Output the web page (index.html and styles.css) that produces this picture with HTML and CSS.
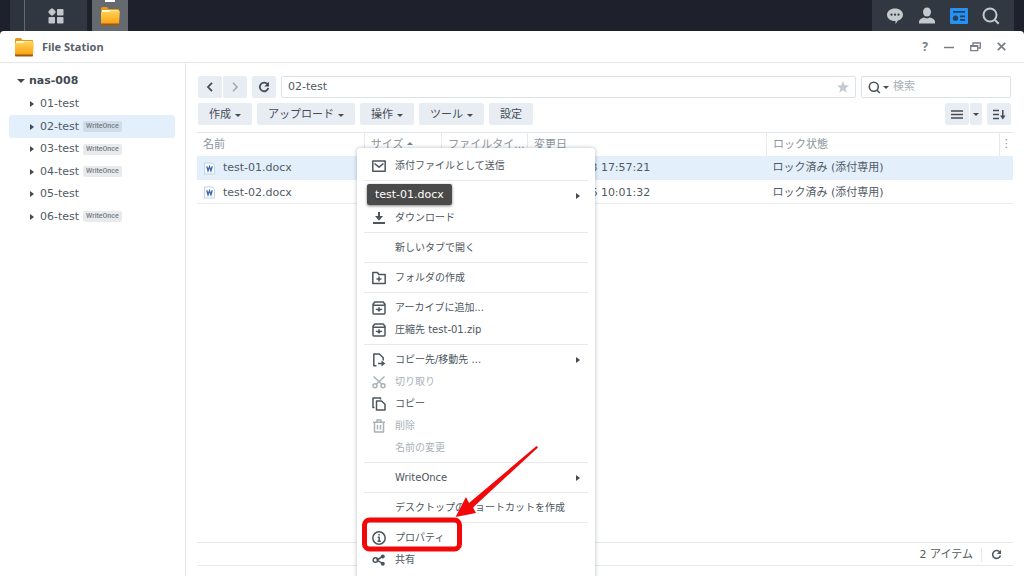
FILE: index.html
```html
<!DOCTYPE html>
<html lang="ja">
<head>
<meta charset="utf-8">
<title>File Station</title>
<link rel="stylesheet" href="styles.css">
</head>
<body>
<svg width="0" height="0" class="defs" aria-hidden="true">
  <defs>
    <linearGradient id="gold" x1="0" y1="0" x2="0" y2="1"><stop offset="0" stop-color="#ffd45a"/><stop offset="1" stop-color="#fb9d0c"/></linearGradient>
    <symbol id="folder" viewBox="0 0 20 20">
      <path d="M1 2.500Q1 1 2.500 1H7l1.500 2H18q1 0 1 1v10H1z" fill="#e59a16"/>
      <path d="M2 4h16v6H2z" fill="#fff6d8"/>
      <path d="M1 6h8l1.500-1.500H19q.8 0 .8 1L19 18q0 1-1 1H2q-1 0-1-1z" fill="url(#gold)"/>
      <path d="M1 17.500h18V18q0 1.500-1 1.500H2q-1 0-1-1z" fill="#9c5a16"/>
    </symbol>
    <symbol id="reload" viewBox="0 0 12 12"><path d="M9.500 3.300A4.300 4.300 0 1 0 10.300 7" fill="none" stroke="currentColor" stroke-width="1.800"/><path d="M11 .8V5.500H6.300z" fill="currentColor"/></symbol>
    <symbol id="archive" viewBox="0 0 14 14"><path d="M2.800 1h8.400L13 3.300V12q0 1-1 1H2q-1 0-1-1V3.300zM1 4.300h12" fill="none" stroke="currentColor" stroke-width="1.500"/><path d="M6.200 6.200h1.600v1.500h2.400v1.400H8.800L7 11 5.200 9.100H3.800V7.700h2.400z" fill="currentColor"/></symbol>
    <symbol id="doc" viewBox="0 0 12 13"><path d="M.5.500h8.500l2.500 2.500v9.500H.5z" fill="#fff" stroke="#b9cfe2"/><path d="M3 4l1.400 5L6 4.500 7.600 9 9 4" fill="none" stroke="#3a66b4" stroke-width="1.400"/></symbol>
  </defs>
</svg>
<div class="desktop">
  <header class="taskbar">
    <button class="task-main" aria-label="メインメニュー"><svg width="16" height="16" viewBox="0 0 16 16" fill="#c3c7cb"><path d="M4 0l4 4-4 4-4-4z"/><rect x="1.500" y="1.500" width="5" height="5" rx="1"/><rect x="9" y="1" width="6.500" height="6.500" rx="1"/><rect x=".5" y="9" width="6.500" height="6.500" rx="1"/><rect x="9" y="9" width="6.500" height="6.500" rx="1"/></svg></button>
    <button class="task-app" aria-label="File Station"><svg width="20" height="20"><use href="#folder"/></svg></button>
    <div class="tray">
      <button aria-label="通知"><svg width="18" height="18" viewBox="0 0 18 18"><path d="M9 1.500c4.500 0 8 2.700 8 6.200 0 2.800-2 4.900-5 5.900L9.500 17v-3C4.500 14.200 1 11.500 1 7.700 1 4.200 4.500 1.500 9 1.500z" fill="#c5c8cc"/><g fill="#323841"><circle cx="5.500" cy="7.700" r="1.100"/><circle cx="9" cy="7.700" r="1.100"/><circle cx="12.500" cy="7.700" r="1.100"/></g></svg></button>
      <button aria-label="ユーザー"><svg width="18" height="18" viewBox="0 0 18 18" fill="#c5c8cc"><ellipse cx="9" cy="5" rx="4" ry="4.600"/><path d="M1 16.500v-2Q1.500 11.500 6 10.500l3 1 3-1q4.500 1 5 4v2z"/></svg></button>
      <button aria-label="ウィジェット"><svg width="18" height="18" viewBox="0 0 18 18"><rect y="1" width="18" height="16" rx="1" fill="#2491f3"/><g fill="#27415f"><path d="M3 4h12v1.700H3zM10 8.500h5v1.700h-5zM10 12h5v1.700h-5z"/><circle cx="5.500" cy="11.200" r="2.600"/></g></svg></button>
      <button aria-label="検索"><svg width="18" height="18" viewBox="0 0 18 18" fill="none" stroke="#c5c8cc" stroke-width="2"><circle cx="8" cy="8" r="6.500"/><path d="M12.700 12.700l4 4"/></svg></button>
    </div>
  </header>

  <section class="window">
    <div class="titlebar">
      <svg width="20" height="20"><use href="#folder"/></svg>
      <h1>File Station</h1>
      <div class="controls">
        <button aria-label="ヘルプ">?</button>
        <button aria-label="最小化"><svg width="10" height="10" viewBox="0 0 10 10"><path d="M0 5.500h10" stroke="currentColor" stroke-width="1.500"/></svg></button>
        <button aria-label="元に戻す"><svg width="11" height="10" viewBox="0 0 11 10"><path d="M3 3V1h7.300v5H8.500M.7 3.700h7v5h-7zM.7 4.300h7" fill="none" stroke="currentColor" stroke-width="1.300"/></svg></button>
        <button aria-label="閉じる"><svg width="9" height="9" viewBox="0 0 9 9"><path d="M.8.800l7.400 7.400M8.200.8L.8 8.200" stroke="currentColor" stroke-width="1.700"/></svg></button>
      </div>
    </div>
    <div class="body">
      <nav class="sidebar">
        <div class="root"><span class="caret"></span>nas-008</div>
        <ul>
          <li><span class="arrow"></span>01-test</li>
          <li class="selected"><span class="arrow"></span>02-test<span class="tag">WriteOnce</span></li>
          <li><span class="arrow"></span>03-test<span class="tag">WriteOnce</span></li>
          <li><span class="arrow"></span>04-test<span class="tag">WriteOnce</span></li>
          <li><span class="arrow"></span>05-test</li>
          <li><span class="arrow"></span>06-test<span class="tag">WriteOnce</span></li>
        </ul>
      </nav>
      <main class="content">
        <div class="bar">
          <div class="group">
            <button class="square" aria-label="戻る"><svg width="8" height="10" viewBox="0 0 8 10"><path d="M6 .8L2 5l4 4.200" fill="none" stroke="currentColor" stroke-width="1.800"/></svg></button>
            <button class="square faint" aria-label="進む"><svg width="8" height="10" viewBox="0 0 8 10"><path d="M2 .8L6 5 2 9.200" fill="none" stroke="currentColor" stroke-width="1.600"/></svg></button>
          </div>
          <button class="square" aria-label="更新"><svg width="12" height="12"><use href="#reload"/></svg></button>
          <div class="field path"><input type="text" value="02-test" aria-label="パス"><svg width="12" height="12" viewBox="0 0 12 12"><path d="M6 0l1.700 4.200 4.300.2-3.400 2.800L9.800 11.800 6 9.200l-3.800 2.600 1.200-4.600L0 4.400l4.300-.2z" fill="#c4cbd2"/></svg></div>
          <div class="field search"><svg width="13" height="13" viewBox="0 0 12 13" fill="none" stroke="#4c545d" stroke-width="1.600"><circle cx="5.300" cy="5.800" r="4.500"/><path d="M8.300 9l3 3"/></svg><span class="drop"></span><input type="text" placeholder="検索" aria-label="検索"></div>
        </div>
        <div class="bar actions">
          <button>作成<span class="drop"></span></button>
          <button>アップロード<span class="drop"></span></button>
          <button>操作<span class="drop"></span></button>
          <button>ツール<span class="drop"></span></button>
          <button>設定</button>
          <div class="group view">
            <button class="square" aria-label="リスト表示"><svg width="12" height="9" viewBox="0 0 12 9"><path d="M0 1h12M0 4.500h12M0 8h12" stroke="currentColor" stroke-width="1.500"/></svg></button>
            <button class="slim" aria-label="表示の選択"><span class="drop"></span></button>
          </div>
          <button class="square" aria-label="並べ替え"><svg width="13" height="11" viewBox="0 0 13 11"><path d="M0 1.500h6M0 5.500h6M0 9.500h6M9.800 1v7" fill="none" stroke="currentColor" stroke-width="1.500"/><path d="M7 6.500h5.600L9.800 10.500z" fill="currentColor"/></svg></button>
        </div>
        <table>
          <colgroup><col class="c-name"><col class="c-size"><col class="c-type"><col class="c-date"><col class="c-lock"><col class="c-more"></colgroup>
          <thead><tr><th>名前</th><th>サイズ<span class="sort"></span></th><th>ファイルタイ...</th><th>変更日</th><th>ロック状態</th><th class="more">⋮</th></tr></thead>
          <tbody>
            <tr class="selected"><td><span class="file"><svg width="11" height="13"><use href="#doc"/></svg>test-01.docx</span></td><td></td><td></td><td>2023-06-23 17:57:21</td><td>ロック済み (添付専用)</td><td></td></tr>
            <tr><td><span class="file"><svg width="11" height="13"><use href="#doc"/></svg>test-02.docx</span></td><td></td><td></td><td>2023-06-26 10:01:32</td><td>ロック済み (添付専用)</td><td></td></tr>
          </tbody>
        </table>
        <footer class="status"><span>2 アイテム</span><button aria-label="再読み込み"><svg width="11" height="11"><use href="#reload"/></svg></button></footer>
      </main>
    </div>
  </section>

  <div class="menu" role="menu">
    <button role="menuitem"><svg viewBox="0 0 14 14"><path d="M.8 2h12.400v10.200H.8zM2.500 4.500L7 8.200 11.500 4.500"/></svg>添付ファイルとして送信</button>
    <hr>
    <button role="menuitem" aria-label="表示"><svg viewBox="0 0 14 14"><path d="M1 7q6-7 12 0-6 7-12 0z"/><circle cx="7" cy="7" r="2"/></svg><span class="arrow"></span></button>
    <button role="menuitem"><svg viewBox="0 0 14 14"><path d="M7 1v6M1 12h12" stroke-width="2"/><path d="M3 5h8L7 9.800z" class="solid"/></svg>ダウンロード</button>
    <hr>
    <button role="menuitem"><svg></svg>新しいタブで開く</button>
    <hr>
    <button role="menuitem"><svg viewBox="0 0 14 14"><path d="M.8 12.500V1.500h4.700l1.300 2h6.400v9zM7 5.500v5M4.500 8h5"/></svg>フォルダの作成</button>
    <hr>
    <button role="menuitem"><svg><use href="#archive"/></svg>アーカイブに追加...</button>
    <button role="menuitem"><svg><use href="#archive"/></svg>圧縮先 test-01.zip</button>
    <hr>
    <button role="menuitem"><svg viewBox="0 0 14 14"><path d="M4.500 12.700H1.800V1h5.500l3.900 3.800V7.500M6 10.500h5"/><path d="M9.500 7.500l3.800 3-3.800 3z" class="solid"/></svg>コピー先/移動先 ...<span class="arrow"></span></button>
    <button role="menuitem" disabled><svg viewBox="0 0 14 14"><path d="M1.500 1.500l8.500 8M12.500 1.500L4 9.500"/><circle cx="3" cy="10.800" r="2"/><circle cx="11" cy="10.800" r="2"/></svg>切り取り</button>
    <button role="menuitem"><svg viewBox="0 0 14 14"><path d="M2.500 10.500H1V1h7.500v1.500M4.500 4h5l3.500 3.300V13H4.500z"/></svg>コピー</button>
    <button role="menuitem" disabled><svg viewBox="0 0 14 14"><path d="M1 3.200h12M5 3V1h4v2M2.500 3.500V13h9V3.500M5.500 6v4.500M8.500 6v4.500"/></svg>削除</button>
    <button role="menuitem" disabled><svg></svg>名前の変更</button>
    <hr>
    <button role="menuitem"><svg></svg>WriteOnce<span class="arrow"></span></button>
    <hr>
    <button role="menuitem"><svg></svg>デスクトップのショートカットを作成</button>
    <hr>
    <button role="menuitem"><svg viewBox="0 0 14 14"><circle cx="7" cy="7" r="6.200"/><path d="M5.700 6.300H7.200v4M5.500 10.300h3.300M6.300 3.800h1.500"/></svg>プロパティ</button>
    <button role="menuitem"><svg viewBox="0 0 14 14"><path d="M10.500 3.500L5 7l5.500 3.700"/><circle cx="3.500" cy="7" r="2.300"/><circle cx="10.800" cy="3.500" r="2" class="solid"/><circle cx="10.800" cy="10.700" r="2" class="solid"/></svg>共有</button>
  </div>
  <div class="tooltip" role="tooltip">test-01.docx</div>
  <svg class="callout" width="182" height="112" viewBox="0 0 182 112" aria-hidden="true">
    <rect x="6.500" y="76" width="95" height="29" rx="5" fill="none" stroke="#f2080b" stroke-width="5"/>
    <path d="M178.500 2L180 3.500 115 63.500 118 69 97.500 73 108 53 111 59z" fill="#f2080b"/>
  </svg>
</div>
</body>
</html>
```
FILE: styles.css
```css
* { box-sizing: border-box; }
body {
  margin: 0;
  font: 11px/16px "DejaVu Sans", "Noto Sans CJK JP", sans-serif;
  color: #525b64;
}
button, input { font: inherit; color: inherit; border: 0; background: none; padding: 0; margin: 0; }
button { display: flex; align-items: center; justify-content: center; }
svg { display: block; flex: none; }
ul { list-style: none; margin: 0; padding: 0; }
.defs { position: absolute; }
.desktop { position: relative; height: 100vh; overflow: hidden; display: flex; flex-direction: column; background: #1e212b; }

.taskbar { display: flex; flex: none; height: 31px; padding: 0 10px; }
.task-main { width: 77px; padding-left: 14px; background: linear-gradient(90deg, #2d343d 14px, #626971 14px, #626971 15px, #303740 15px); }
.task-app { width: 36px; margin-left: 5px; background: linear-gradient(#fff, #fff) 50% 0 / 10px 2px no-repeat #656970; }
.tray { display: flex; align-items: center; gap: 14px; margin-left: auto; padding: 0 14px; background: #323841; }

.window { flex: 1; min-height: 0; display: flex; flex-direction: column; background: #fff; border-radius: 4px 4px 0 0; }
.titlebar { display: flex; align-items: center; gap: 8px; flex: none; height: 32px; padding: 0 18px 0 14px; border-bottom: 1px solid #e2e8ec; }
.titlebar h1 { margin: 0; font: bold 11px/16px "Noto Sans", sans-serif; color: #59616a; }
.controls { display: flex; align-items: center; gap: 16px; margin-left: auto; color: #767d84; font: bold 12px/16px "Noto Sans", sans-serif; }
.body { flex: 1; min-height: 0; display: flex; }

.sidebar { flex: none; width: 186px; padding: 6px 10px 0 9px; border-right: 1px solid #e2e8ec; }
.root { display: flex; align-items: center; gap: 4px; height: 24px; padding-left: 8px; font-weight: bold; color: #414a53; }
.sidebar li { display: flex; align-items: center; height: 22px; padding-left: 21px; border-radius: 3px; }
.sidebar li:nth-child(even) { height: 23px; }
.sidebar li .arrow { margin-right: 6px; }
.sidebar .selected { background: #e3effb; }
.caret { border: 4px solid transparent; border-top-color: #414a53; border-bottom: 0; }
.arrow { border: 3px solid transparent; border-left: 4px solid #424b54; border-right: 0; }
.tag { margin-left: 4px; padding: 0 3px; background: rgba(90, 105, 120, .14); border-radius: 2px; font: 500 7px/11px Roboto, sans-serif; color: #737c86; }

.content { flex: 1; min-width: 0; display: flex; flex-direction: column; padding: 13px 11px 10px; }
.bar { display: flex; gap: 5px; padding: 0 2px 5px 1px; }
.bar button { height: 22px; padding: 0 11px; background: #e8ecf3; border-radius: 2px; color: #434c56; white-space: nowrap; }
.bar .square { width: 24px; padding: 0; }
.bar .slim { width: 12px; padding: 0; }
.bar .faint { color: #a1a8b0; }
.group { display: flex; gap: 1px; }
.view { margin-left: auto; }
.drop { border: 3px solid transparent; border-top-color: #434c56; border-bottom: 0; }
.actions { padding-bottom: 7px; }
.actions button { padding-top: 2px; }
.actions .drop { margin-left: 4px; }
.actions .slim .drop { margin: 0; }
.field { display: flex; align-items: center; border: 1px solid #dce3e8; border-radius: 2px; padding: 0 6px; }
.field input { flex: 1; min-width: 0; width: 0; outline: 0; }
.field input::placeholder { color: #a9afb5; opacity: 1; }
.path { flex: 1; }
.search { width: 150px; gap: 4px; }
.search .drop { margin-left: -2px; }

table { width: 100%; table-layout: fixed; border-collapse: collapse; border-top: 1px solid #dfe5e9; }
.c-name { width: 20.5%; } .c-size { width: 9.5%; } .c-type { width: 10.5%; } .c-date { width: 29.3%; } .c-more { width: 14px; }
th, td { padding: 1px 6px 0; text-align: left; white-space: nowrap; }
th { height: 23px; font-weight: normal; color: #8d949b; border-right: 1px solid #e6eaed; }
th.more { padding: 0; text-align: center; border: 0; }
td { height: 24px; padding-top: 2px; border-bottom: 1px solid #e9edf0; }
tr.selected td { background: #e3effb; }
.file { display: flex; align-items: center; gap: 8px; padding-left: 1px; }
.sort { display: inline-block; margin: 0 0 3px 4px; border: 3px solid transparent; border-bottom-color: #7b838b; border-top: 0; }
.status { display: flex; align-items: center; justify-content: flex-end; gap: 8px; height: 24px; margin-top: auto; padding: 1px 11px 0; border: 1px solid #e4e9ec; border-width: 1px 0; }
.status button { padding-left: 9px; height: 14px; border-left: 1px solid #e4e9ec; }

.menu { position: absolute; left: 357px; top: 148px; width: 238px; padding: 7px 7px 20px; background: #fff; border-radius: 3px; box-shadow: 0 0 4px rgba(70, 90, 100, .4); font-size: 10px; }
.menu button { width: 100%; height: 22px; padding: 0 8px; justify-content: flex-start; text-align: left; color: #4c555e; }
.menu button:disabled { color: #abb1b7; }
.menu hr { height: 1px; margin: 3px 0 4px; border: 0; background: #e6eaed; }
.menu svg { width: 14px; height: 14px; margin-right: 9px; fill: none; stroke: currentColor; stroke-width: 1.5; stroke-linejoin: round; }
.menu .solid { fill: currentColor; stroke: none; }
.menu use { stroke: none; }
.menu .arrow { margin-left: auto; }
.tooltip { position: absolute; left: 367px; top: 184px; padding: 3px 8px; background: rgba(64, 64, 64, .95); border-radius: 2px; box-shadow: 0 1px 3px rgba(0, 0, 0, .5); font: 11px/15px "DejaVu Sans", sans-serif; color: #fff; }
.callout { position: absolute; left: 358px; top: 444px; pointer-events: none; }
```
